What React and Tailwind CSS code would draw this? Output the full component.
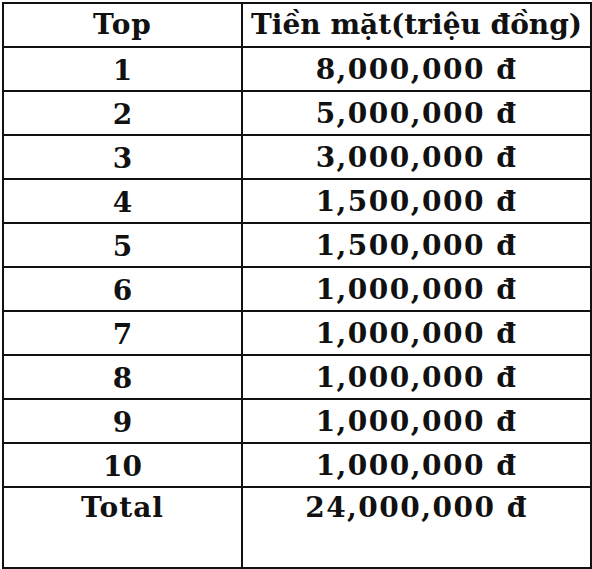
const rows = [
  ['1', '8,000,000 đ'],
  ['2', '5,000,000 đ'],
  ['3', '3,000,000 đ'],
  ['4', '1,500,000 đ'],
  ['5', '1,500,000 đ'],
  ['6', '1,000,000 đ'],
  ['7', '1,000,000 đ'],
  ['8', '1,000,000 đ'],
  ['9', '1,000,000 đ'],
  ['10', '1,000,000 đ'],
]

export default function App() {
  return (
    <div className="w-[592px] h-[569px] bg-white pt-[2px] pl-[2px]">
      <table className="border-collapse text-[#111] font-bold text-[28px] leading-none" style={{ fontFamily: '"DejaVu Serif", serif' }}>
        <thead>
          <tr className="h-[44px]">
            <th className="w-[239px] border-2 border-[#111] text-center align-middle tracking-[1px]">Top</th>
            <th className="w-[349px] border-2 border-[#111] text-center align-middle">Tiền mặt(triệu đồng)</th>
          </tr>
        </thead>
        <tbody>
          {rows.map(([top, amount]) => (
            <tr key={top} className="h-[44px]">
              <td className="border-2 border-[#111] text-center align-middle pt-[3px]">{top}</td>
              <td className="border-2 border-[#111] text-center align-middle pt-[2px] tracking-[1.5px]">{amount}</td>
            </tr>
          ))}
          <tr className="h-[81px]">
            <td className="border-2 border-[#111] text-center align-top pt-[6px] tracking-[1px]">Total</td>
            <td className="border-2 border-[#111] text-center align-top pt-[6px] tracking-[1.5px]">24,000,000 đ</td>
          </tr>
        </tbody>
      </table>
    </div>
  )
}
